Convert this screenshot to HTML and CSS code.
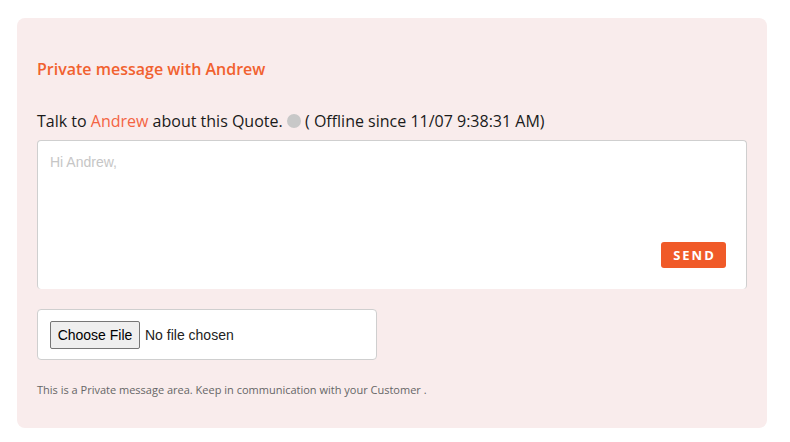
FILE: index.html
```html
<!DOCTYPE html>
<html>
<head>
<meta charset="utf-8">
<link rel="stylesheet" href="styles.css">
</head>
<body>
<div class="card">
  <h3 class="title">Private message with Andrew</h3>
  <p class="talk">Talk to <span class="name">Andrew</span> about this Quote. <span class="dot"></span> ( Offline since 11/07 9:38:31 AM)</p>
  <div class="composer">
    <div class="placeholder">Hi Andrew,</div>
    <div class="actions"><button class="send">SEND</button></div>
  </div>
  <div class="filebox">
    <span class="choose">Choose File</span><span class="nofile">No file chosen</span>
  </div>
  <p class="note">This is a Private message area. Keep in communication with your Customer .</p>
</div>
</body>
</html>
```
FILE: styles.css
```css
* { box-sizing: border-box; }
body {
  margin: 0;
  background: #fff;
  font-family: "Open Sans", sans-serif;
}
.card {
  margin: 18px 23px 0 17px;
  width: 750px;
  height: 410px;
  background: #f9ecec;
  border-radius: 8px;
  padding: 20px 20px 0 20px;
  display: flex;
  flex-direction: column;
}
.title {
  margin: 20px 0 0 0;
  font-size: 16px;
  font-weight: 600;
  line-height: 22px;
  color: #f1612f;
}
.talk {
  margin: 30px 0 0 0;
  font-size: 16px;
  line-height: 22px;
  color: #1a1a1a;
}
.name { color: #f46443; }
.dot {
  display: inline-block;
  width: 14px;
  height: 14px;
  border-radius: 50%;
  background: #c8c8c8;
  vertical-align: -1px;
}
.composer {
  margin-top: 8px;
  height: 149px;
  background: #fff;
  border: 1px solid #cfcfcf;
  border-bottom: none;
  border-radius: 4px;
  padding: 12px 20px 0 12px;
  display: flex;
  flex-direction: column;
}
.placeholder {
  font-family: "Liberation Sans", Arial, sans-serif;
  font-size: 14px;
  color: #c6c6c6;
  line-height: 18px;
}
.actions {
  margin-top: auto;
  margin-bottom: 21px;
  display: flex;
  justify-content: flex-end;
}
.send {
  width: 65px;
  height: 26px;
  background: #f05a28;
  color: #fff;
  border: none;
  border-radius: 3px;
  font-family: "Open Sans", sans-serif;
  font-weight: 700;
  font-size: 13px;
  letter-spacing: 2px;
  padding: 0 0 0 2px;
}
.filebox {
  margin-top: 20px;
  width: 340px;
  height: 51px;
  background: #fff;
  border: 1px solid #cfcfcf;
  border-radius: 4px;
  padding: 0 12px;
  display: flex;
  align-items: center;
  font-family: "Liberation Sans", Arial, sans-serif;
  font-size: 14px;
  color: #222;
}
.choose {
  display: inline-flex;
  align-items: center;
  justify-content: center;
  width: 90px;
  height: 28px;
  background: #efefef;
  border: 1px solid #767676;
  border-radius: 2px;
  color: #000;
  margin-right: 5px;
}
.nofile { color: #222; }
.note {
  margin: 22px 0 0 0;
  font-size: 11px;
  line-height: 16px;
  color: #666;
}
```
